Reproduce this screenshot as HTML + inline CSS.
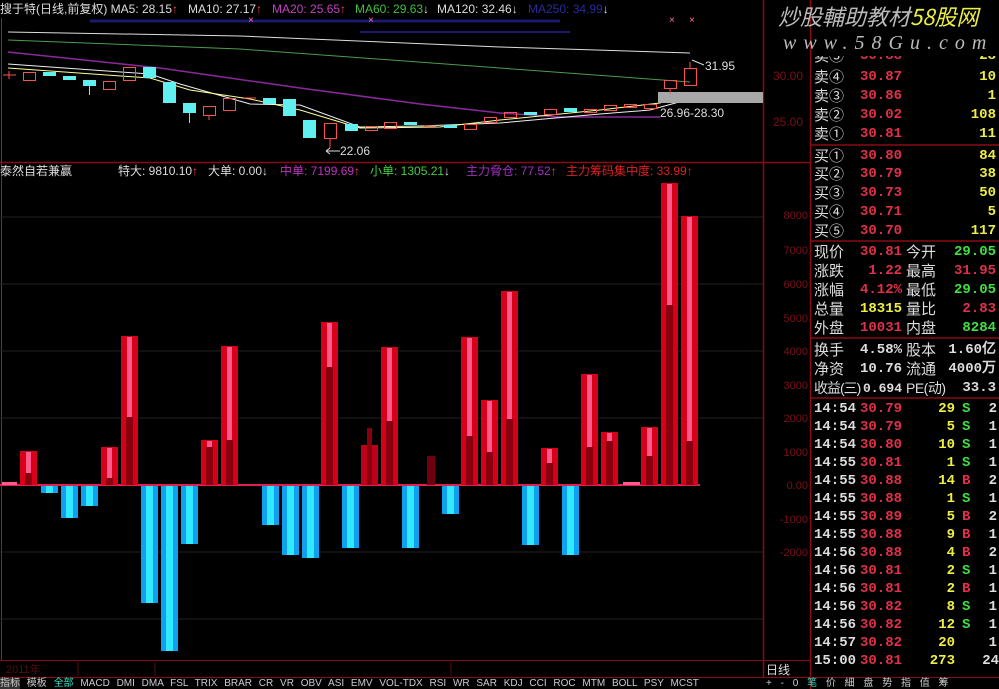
<!DOCTYPE html>
<html><head><meta charset="utf-8">
<style>
*{margin:0;padding:0;box-sizing:border-box}
body{width:999px;height:689px;background:#000;overflow:hidden;position:relative;font-family:"Liberation Sans","Noto Sans CJK SC",sans-serif;}
.t{position:absolute;white-space:nowrap;line-height:1}
.r{position:absolute;left:812px;width:187px;height:19px;font-size:15px;line-height:19px;color:#ddd}
.r span{position:absolute;white-space:nowrap}
.n{font-weight:bold;font-family:"Liberation Mono","DejaVu Sans Mono",monospace;font-size:14px}
</style></head><body>
<svg width="999" height="689" style="position:absolute;left:0;top:0" xmlns="http://www.w3.org/2000/svg" font-family="Liberation Sans, Noto Sans CJK SC, sans-serif">
<line x1="0" y1="162.5" x2="810" y2="162.5" stroke="#8a0a14" stroke-width="1.5"/>
<line x1="763.5" y1="0" x2="763.5" y2="678" stroke="#8a0a14" stroke-width="1.5"/>
<line x1="810.5" y1="0" x2="810.5" y2="689" stroke="#8a0a14" stroke-width="1.5"/>
<line x1="0" y1="660.5" x2="810" y2="660.5" stroke="#8a0a14"/>
<line x1="0" y1="677.5" x2="999" y2="677.5" stroke="#8a0a14"/>
<line x1="1.5" y1="18" x2="1.5" y2="660" stroke="#444"/>
<g stroke="#222" stroke-width="1">
<line x1="0" y1="217" x2="763" y2="217"/><line x1="0" y1="284" x2="763" y2="284"/>
<line x1="0" y1="351" x2="763" y2="351"/><line x1="0" y1="418" x2="763" y2="418"/>
<line x1="0" y1="552" x2="763" y2="552"/><line x1="0" y1="619" x2="763" y2="619"/>
</g>
<polyline points="90,21 560,21" stroke="#1a1a70" stroke-width="3" fill="none"/>
<polyline points="360,32 570,32" stroke="#1a1a70" stroke-width="2" fill="none"/>
<polyline points="8,32 240,36 500,47 690,53" stroke="#ddd" stroke-width="1" fill="none"/>
<polyline points="8,40 240,49 500,68 690,82" stroke="#4c9c4c" stroke-width="1" fill="none"/>
<polyline points="8,52 160,68 300,88 420,104 500,113 560,117 660,117" stroke="#8a2a9a" stroke-width="1.5" fill="none"/>
<polyline points="8,64 150,74 180,84 250,104 300,105 360,127 420,126 500,123 600,114 650,110 690,99" stroke="#eee" stroke-width="1" fill="none"/>
<polyline points="8,68 150,78 190,90 250,99 300,110 360,128 440,127 500,120 600,110 660,103 690,93" stroke="#ff9" stroke-width="1" fill="none"/>
<rect x="658" y="92" width="105" height="11" fill="#a8a8a8"/>
<g stroke="#ff5050" fill="none" stroke-width="1">
<line x1="3" y1="75" x2="16" y2="75"/><line x1="9" y1="71" x2="9" y2="79"/>
<rect x="23.5" y="72.5" width="12" height="8"/>
<rect x="103.5" y="81.5" width="12" height="8"/>
<rect x="123.5" y="67.5" width="12" height="13"/>
<rect x="203.5" y="106.5" width="12" height="9"/><line x1="209" y1="115" x2="209" y2="120"/>
<rect x="223.5" y="98.5" width="12" height="12"/>
<line x1="244" y1="98" x2="256" y2="98"/>
<rect x="324.5" y="123.5" width="12" height="15"/><line x1="330" y1="138" x2="330" y2="148"/>
<rect x="365.5" y="126.5" width="12" height="4"/>
<rect x="384.5" y="122.5" width="12" height="6"/>
<line x1="424" y1="126" x2="436" y2="126"/>
<rect x="464.5" y="124.5" width="12" height="5"/>
<rect x="484.5" y="117.5" width="12" height="5"/>
<rect x="504.5" y="112.5" width="12" height="5"/>
<rect x="544.5" y="109.5" width="12" height="5"/>
<rect x="584.5" y="109.5" width="12" height="3"/>
<rect x="604.5" y="105.5" width="12" height="5"/>
<rect x="624.5" y="104.5" width="12" height="3"/>
<rect x="644.5" y="104.5" width="12" height="4"/>
<rect x="664.5" y="80.5" width="12" height="8"/><line x1="670" y1="88" x2="670" y2="94"/>
<rect x="684.5" y="68.5" width="12" height="17"/><line x1="690" y1="62" x2="690" y2="68"/>
</g>
<g fill="#60f0f0">
<rect x="43" y="72" width="13" height="4"/><rect x="63" y="76" width="13" height="4"/>
<rect x="83" y="80" width="13" height="6"/><rect x="89" y="86" width="1" height="9"/>
<rect x="143" y="67" width="13" height="11"/><rect x="163" y="82" width="13" height="21"/>
<rect x="183" y="103" width="13" height="10"/><rect x="189" y="113" width="1" height="10"/>
<rect x="263" y="98" width="13" height="6"/><rect x="283" y="99" width="13" height="17"/>
<rect x="303" y="120" width="13" height="18"/><rect x="345" y="124" width="13" height="7"/>
<rect x="404" y="122" width="13" height="3"/><rect x="444" y="125" width="13" height="3"/>
<rect x="524" y="112" width="13" height="3"/><rect x="564" y="108" width="13" height="4"/>
</g>
<g fill="#ff6fa0" font-size="10"><text x="248" y="23">×</text><text x="368" y="23">×</text><text x="669" y="23">×</text><text x="689" y="23">×</text></g>
<text x="705" y="70" fill="#ddd" font-size="12">31.95</text>
<line x1="692" y1="60" x2="704" y2="65" stroke="#ddd"/>
<text x="660" y="117" fill="#ddd" font-size="12">26.96-28.30</text>
<text x="340" y="155" fill="#ddd" font-size="12">22.06</text>
<line x1="326" y1="151" x2="340" y2="151" stroke="#ddd"/><path d="M326 151 l4 -3 M326 151 l4 3" stroke="#ddd"/>
<g fill="#7a1018" font-size="12"><text x="773" y="80">30.00</text><text x="773" y="126">25.00</text></g>
<g fill="#7a1018" font-size="11" text-anchor="end">
<text x="808" y="219">8000</text><text x="808" y="254">7000</text><text x="808" y="288">6000</text>
<text x="808" y="322">5000</text><text x="808" y="355">4000</text><text x="808" y="389">3000</text>
<text x="808" y="422">2000</text><text x="808" y="456">1000</text><text x="808" y="489">0.00</text>
<text x="808" y="523">-1000</text><text x="808" y="556">-2000</text>
</g>
<line x1="0" y1="485" x2="700" y2="485" stroke="#e02050" stroke-width="2"/>
<g>
<rect x="41" y="486" width="17" height="7" fill="#10a0f0"/><rect x="46" y="486" width="7" height="7" fill="#30e8ff"/>
<rect x="61" y="486" width="17" height="32" fill="#10a0f0"/><rect x="66" y="486" width="7" height="32" fill="#30e8ff"/>
<rect x="81" y="486" width="17" height="20" fill="#10a0f0"/><rect x="86" y="486" width="7" height="20" fill="#30e8ff"/>
<rect x="141" y="486" width="17" height="117" fill="#10a0f0"/><rect x="146" y="486" width="7" height="117" fill="#30e8ff"/>
<rect x="161" y="486" width="17" height="165" fill="#10a0f0"/><rect x="166" y="486" width="7" height="165" fill="#30e8ff"/>
<rect x="181" y="486" width="17" height="58" fill="#10a0f0"/><rect x="186" y="486" width="7" height="58" fill="#30e8ff"/>
<rect x="262" y="486" width="17" height="39" fill="#10a0f0"/><rect x="267" y="486" width="7" height="39" fill="#30e8ff"/>
<rect x="282" y="486" width="17" height="69" fill="#10a0f0"/><rect x="287" y="486" width="7" height="69" fill="#30e8ff"/>
<rect x="302" y="486" width="17" height="72" fill="#10a0f0"/><rect x="307" y="486" width="7" height="72" fill="#30e8ff"/>
<rect x="342" y="486" width="17" height="62" fill="#10a0f0"/><rect x="347" y="486" width="7" height="62" fill="#30e8ff"/>
<rect x="402" y="486" width="17" height="62" fill="#10a0f0"/><rect x="407" y="486" width="7" height="62" fill="#30e8ff"/>
<rect x="442" y="486" width="17" height="28" fill="#10a0f0"/><rect x="447" y="486" width="7" height="28" fill="#30e8ff"/>
<rect x="522" y="486" width="17" height="59" fill="#10a0f0"/><rect x="527" y="486" width="7" height="59" fill="#30e8ff"/>
<rect x="562" y="486" width="17" height="69" fill="#10a0f0"/><rect x="567" y="486" width="7" height="69" fill="#30e8ff"/>
</g>
<g>
<rect x="20" y="451" width="17" height="34" fill="#d80018"/><rect x="25" y="473" width="7" height="12" fill="#880010"/><rect x="26" y="452" width="5" height="21" fill="#ff5a8c"/>
<rect x="101" y="447" width="17" height="38" fill="#d80018"/><rect x="106" y="478" width="7" height="7" fill="#880010"/><rect x="107" y="448" width="5" height="30" fill="#ff5a8c"/>
<rect x="121" y="336" width="17" height="149" fill="#d80018"/><rect x="126" y="417" width="7" height="68" fill="#880010"/><rect x="127" y="337" width="5" height="80" fill="#ff5a8c"/>
<rect x="201" y="440" width="17" height="45" fill="#d80018"/><rect x="206" y="447" width="7" height="38" fill="#880010"/><rect x="207" y="441" width="5" height="6" fill="#ff5a8c"/>
<rect x="221" y="346" width="17" height="139" fill="#d80018"/><rect x="226" y="440" width="7" height="45" fill="#880010"/><rect x="227" y="347" width="5" height="93" fill="#ff5a8c"/>
<rect x="321" y="322" width="17" height="163" fill="#d80018"/><rect x="326" y="367" width="7" height="118" fill="#880010"/><rect x="327" y="323" width="5" height="44" fill="#ff5a8c"/>
<rect x="361" y="445" width="17" height="40" fill="#c00018"/><rect x="367" y="428" width="5" height="57" fill="#880010"/>
<rect x="381" y="347" width="17" height="138" fill="#d80018"/><rect x="386" y="421" width="7" height="64" fill="#880010"/><rect x="387" y="348" width="5" height="73" fill="#ff5a8c"/>
<rect x="427" y="456" width="8" height="29" fill="#700010"/>
<rect x="461" y="337" width="17" height="148" fill="#d80018"/><rect x="466" y="436" width="7" height="49" fill="#880010"/><rect x="467" y="338" width="5" height="98" fill="#ff5a8c"/>
<rect x="481" y="400" width="17" height="85" fill="#d80018"/><rect x="486" y="452" width="7" height="33" fill="#880010"/><rect x="487" y="401" width="5" height="51" fill="#ff5a8c"/>
<rect x="501" y="291" width="17" height="194" fill="#d80018"/><rect x="506" y="419" width="7" height="66" fill="#880010"/><rect x="507" y="292" width="5" height="127" fill="#ff5a8c"/>
<rect x="541" y="448" width="17" height="37" fill="#d80018"/><rect x="546" y="463" width="7" height="22" fill="#880010"/><rect x="547" y="449" width="5" height="14" fill="#ff5a8c"/>
<rect x="581" y="374" width="17" height="111" fill="#d80018"/><rect x="586" y="447" width="7" height="38" fill="#880010"/><rect x="587" y="375" width="5" height="72" fill="#ff5a8c"/>
<rect x="601" y="432" width="17" height="53" fill="#d80018"/><rect x="606" y="441" width="7" height="44" fill="#880010"/><rect x="607" y="433" width="5" height="8" fill="#ff5a8c"/>
<rect x="623" y="482" width="17" height="3" fill="#ff5a8c"/>
<rect x="2" y="482" width="15" height="3" fill="#ff5a8c"/>
<rect x="641" y="427" width="17" height="58" fill="#d80018"/><rect x="646" y="456" width="7" height="29" fill="#880010"/><rect x="647" y="428" width="5" height="28" fill="#ff5a8c"/>
<rect x="661" y="183" width="17" height="302" fill="#d80018"/><rect x="666" y="305" width="7" height="180" fill="#880010"/><rect x="667" y="184" width="5" height="121" fill="#ff5a8c"/>
<rect x="681" y="216" width="17" height="269" fill="#d80018"/><rect x="686" y="441" width="7" height="44" fill="#880010"/><rect x="687" y="217" width="5" height="224" fill="#ff5a8c"/>
</g>
<text x="6" y="673" fill="#5a0a10" font-size="11">2011年</text>
<g stroke="#5a0a10"><line x1="78" y1="662" x2="78" y2="676"/><line x1="155" y1="662" x2="155" y2="676"/><line x1="451" y1="662" x2="451" y2="676"/></g>
<text x="766" y="674" fill="#ddd" font-size="12" font-family="Noto Sans CJK SC, sans-serif">日线</text>
<g stroke="#8a0a14" stroke-width="1.5">
<line x1="811" y1="145" x2="999" y2="145"/><line x1="811" y1="241" x2="999" y2="241"/>
<line x1="811" y1="338" x2="999" y2="338"/><line x1="811" y1="398" x2="999" y2="398"/>
</g>
</svg>

<div class="t" style="left:0;top:3px;font-size:12px;color:#ddd">搜于特(日线,前复权) MA5: 28.15<span style="color:#f44">↑</span></div>
<div class="t" style="left:188px;top:3px;font-size:12px;color:#ddd">MA10: 27.17<span style="color:#f44">↑</span></div>
<div class="t" style="left:272px;top:3px;font-size:12px;color:#c040c0">MA20: 25.65<span style="color:#f44">↑</span></div>
<div class="t" style="left:355px;top:3px;font-size:12px;color:#40c040">MA60: 29.63<span style="color:#ddd">↓</span></div>
<div class="t" style="left:437px;top:3px;font-size:12px;color:#ddd">MA120: 32.46<span style="color:#ddd">↓</span></div>
<div class="t" style="left:528px;top:3px;font-size:12px;color:#2a2aa0">MA250: 34.99<span style="color:#ddd">↓</span></div>
<div class="t" style="left:0;top:165px;font-size:12px;color:#ddd">泰然自若兼赢</div>
<div class="t" style="left:118px;top:165px;font-size:12px;color:#ddd">特大: 9810.10<span style="color:#f44">↑</span></div>
<div class="t" style="left:208px;top:165px;font-size:12px;color:#ddd">大单: 0.00<span>↓</span></div>
<div class="t" style="left:280px;top:165px;font-size:12px;color:#c030c0">中单: 7199.69<span style="color:#f44">↑</span></div>
<div class="t" style="left:370px;top:165px;font-size:12px;color:#40d040">小单: 1305.21<span style="color:#ddd">↓</span></div>
<div class="t" style="left:466px;top:165px;font-size:12px;color:#a030c0">主力脅仓: 77.52<span style="color:#f44">↑</span></div>
<div class="t" style="left:566px;top:165px;font-size:12px;color:#e02020">主力筹码集中度: 33.99<span>↑</span></div>

<div class="t" style="left:778px;top:5px;font-size:22px;font-style:italic;color:#bbb;font-family:'Noto Sans CJK SC',sans-serif">炒股輔助教材<span style="color:#ee4">58股网</span></div>
<div class="t" style="left:783px;top:33px;font-size:20px;font-style:italic;color:#bbb;letter-spacing:7px;font-family:'Liberation Serif',serif">www.58Gu.com</div>

<div style="position:absolute;left:812px;top:56px;width:187px;height:8px;overflow:hidden">
<div class="r" style="left:0;top:-9px"><span style="left:2px">卖⑤</span><span class="n" style="right:97px;color:#e0304a">30.88</span><span class="n" style="right:3px;color:#ee4">28</span></div></div>
<div class="r" style="top:68px"><span style="left:2px">卖④</span><span class="n" style="right:97px;color:#e0304a">30.87</span><span class="n" style="right:3px;color:#ee4">10</span></div>
<div class="r" style="top:87px"><span style="left:2px">卖③</span><span class="n" style="right:97px;color:#e0304a">30.86</span><span class="n" style="right:3px;color:#ee4">1</span></div>
<div class="r" style="top:106px"><span style="left:2px">卖②</span><span class="n" style="right:97px;color:#e0304a">30.02</span><span class="n" style="right:3px;color:#ee4">108</span></div>
<div class="r" style="top:125px"><span style="left:2px">卖①</span><span class="n" style="right:97px;color:#e0304a">30.81</span><span class="n" style="right:3px;color:#ee4">11</span></div>
<div class="r" style="top:147px"><span style="left:2px">买①</span><span class="n" style="right:97px;color:#e0304a">30.80</span><span class="n" style="right:3px;color:#ee4">84</span></div>
<div class="r" style="top:165px"><span style="left:2px">买②</span><span class="n" style="right:97px;color:#e0304a">30.79</span><span class="n" style="right:3px;color:#ee4">38</span></div>
<div class="r" style="top:184px"><span style="left:2px">买③</span><span class="n" style="right:97px;color:#e0304a">30.73</span><span class="n" style="right:3px;color:#ee4">50</span></div>
<div class="r" style="top:203px"><span style="left:2px">买④</span><span class="n" style="right:97px;color:#e0304a">30.71</span><span class="n" style="right:3px;color:#ee4">5</span></div>
<div class="r" style="top:222px"><span style="left:2px">买⑤</span><span class="n" style="right:97px;color:#e0304a">30.70</span><span class="n" style="right:3px;color:#ee4">117</span></div>

<div class="r" style="top:243px"><span style="left:2px">现价</span><span class="n" style="right:97px;color:#e0304a">30.81</span><span style="left:94px">今开</span><span class="n" style="right:3px;color:#40e040">29.05</span></div>
<div class="r" style="top:262px"><span style="left:2px">涨跌</span><span class="n" style="right:97px;color:#e0304a">1.22</span><span style="left:94px">最高</span><span class="n" style="right:3px;color:#e0304a">31.95</span></div>
<div class="r" style="top:281px"><span style="left:2px">涨幅</span><span class="n" style="right:97px;color:#e0304a">4.12%</span><span style="left:94px">最低</span><span class="n" style="right:3px;color:#40e040">29.05</span></div>
<div class="r" style="top:300px"><span style="left:2px">总量</span><span class="n" style="right:97px;color:#ee4">18315</span><span style="left:94px">量比</span><span class="n" style="right:3px;color:#e0304a">2.83</span></div>
<div class="r" style="top:319px"><span style="left:2px">外盘</span><span class="n" style="right:97px;color:#e0304a">10031</span><span style="left:94px">内盘</span><span class="n" style="right:3px;color:#40e040">8284</span></div>

<div class="r" style="top:341px"><span style="left:2px">换手</span><span class="n" style="right:97px;color:#ddd">4.58%</span><span style="left:94px">股本</span><span class="n" style="right:3px;color:#ddd">1.60亿</span></div>
<div class="r" style="top:360px"><span style="left:2px">净资</span><span class="n" style="right:97px;color:#ddd">10.76</span><span style="left:94px">流通</span><span class="n" style="right:3px;color:#ddd">4000万</span></div>
<div class="r" style="top:379px"><span style="left:2px;font-size:14px;letter-spacing:-1px">收益(三)</span><span class="n" style="right:97px;color:#ddd;font-size:13px">0.694</span><span style="left:94px;font-size:14px;letter-spacing:-0.5px">PE(动)</span><span class="n" style="right:3px;color:#ddd">33.3</span></div>

<div class="r n" style="top:400px"><span style="left:2px;color:#ddd">14:54</span><span style="right:97px;color:#e0304a">30.79</span><span style="right:44px;color:#ee4">29</span><span style="left:150px;color:#40e040">S</span><span style="right:2px;color:#ddd">2</span></div>
<div class="r n" style="top:418px"><span style="left:2px;color:#ddd">14:54</span><span style="right:97px;color:#e0304a">30.79</span><span style="right:44px;color:#ee4">5</span><span style="left:150px;color:#40e040">S</span><span style="right:2px;color:#ddd">1</span></div>
<div class="r n" style="top:436px"><span style="left:2px;color:#ddd">14:54</span><span style="right:97px;color:#e0304a">30.80</span><span style="right:44px;color:#ee4">10</span><span style="left:150px;color:#40e040">S</span><span style="right:2px;color:#ddd">1</span></div>
<div class="r n" style="top:454px"><span style="left:2px;color:#ddd">14:55</span><span style="right:97px;color:#e0304a">30.81</span><span style="right:44px;color:#ee4">1</span><span style="left:150px;color:#40e040">S</span><span style="right:2px;color:#ddd">1</span></div>
<div class="r n" style="top:472px"><span style="left:2px;color:#ddd">14:55</span><span style="right:97px;color:#e0304a">30.88</span><span style="right:44px;color:#ee4">14</span><span style="left:150px;color:#e0304a">B</span><span style="right:2px;color:#ddd">2</span></div>
<div class="r n" style="top:490px"><span style="left:2px;color:#ddd">14:55</span><span style="right:97px;color:#e0304a">30.88</span><span style="right:44px;color:#ee4">1</span><span style="left:150px;color:#40e040">S</span><span style="right:2px;color:#ddd">1</span></div>
<div class="r n" style="top:508px"><span style="left:2px;color:#ddd">14:55</span><span style="right:97px;color:#e0304a">30.89</span><span style="right:44px;color:#ee4">5</span><span style="left:150px;color:#e0304a">B</span><span style="right:2px;color:#ddd">2</span></div>
<div class="r n" style="top:526px"><span style="left:2px;color:#ddd">14:55</span><span style="right:97px;color:#e0304a">30.88</span><span style="right:44px;color:#ee4">9</span><span style="left:150px;color:#e0304a">B</span><span style="right:2px;color:#ddd">1</span></div>
<div class="r n" style="top:544px"><span style="left:2px;color:#ddd">14:56</span><span style="right:97px;color:#e0304a">30.88</span><span style="right:44px;color:#ee4">4</span><span style="left:150px;color:#e0304a">B</span><span style="right:2px;color:#ddd">2</span></div>
<div class="r n" style="top:562px"><span style="left:2px;color:#ddd">14:56</span><span style="right:97px;color:#e0304a">30.81</span><span style="right:44px;color:#ee4">2</span><span style="left:150px;color:#40e040">S</span><span style="right:2px;color:#ddd">1</span></div>
<div class="r n" style="top:580px"><span style="left:2px;color:#ddd">14:56</span><span style="right:97px;color:#e0304a">30.81</span><span style="right:44px;color:#ee4">2</span><span style="left:150px;color:#e0304a">B</span><span style="right:2px;color:#ddd">1</span></div>
<div class="r n" style="top:598px"><span style="left:2px;color:#ddd">14:56</span><span style="right:97px;color:#e0304a">30.82</span><span style="right:44px;color:#ee4">8</span><span style="left:150px;color:#40e040">S</span><span style="right:2px;color:#ddd">1</span></div>
<div class="r n" style="top:616px"><span style="left:2px;color:#ddd">14:56</span><span style="right:97px;color:#e0304a">30.82</span><span style="right:44px;color:#ee4">12</span><span style="left:150px;color:#40e040">S</span><span style="right:2px;color:#ddd">1</span></div>
<div class="r n" style="top:634px"><span style="left:2px;color:#ddd">14:57</span><span style="right:97px;color:#e0304a">30.82</span><span style="right:44px;color:#ee4">20</span><span style="right:2px;color:#ddd">1</span></div>
<div class="r n" style="top:652px"><span style="left:2px;color:#ddd">15:00</span><span style="right:97px;color:#e0304a">30.81</span><span style="right:44px;color:#ee4">273</span><span style="right:0px;color:#ddd">24</span></div>

<div class="t" style="left:0;top:679px;height:10px;font-size:10px;color:#ccc;word-spacing:4px"><span style="background:#333">指标</span> 模板 <span style="color:#30e0c0">全部</span> MACD DMI DMA FSL TRIX BRAR CR VR OBV ASI EMV VOL-TDX RSI WR SAR KDJ CCI ROC MTM BOLL PSY MCST</div>
<div class="t" style="left:766px;top:679px;font-size:10px;color:#ccc;word-spacing:6px">+ - 0 <span style="color:#30e0c0">笔</span> 价 細 盘 势 指 值 筹</div>
</body></html>
